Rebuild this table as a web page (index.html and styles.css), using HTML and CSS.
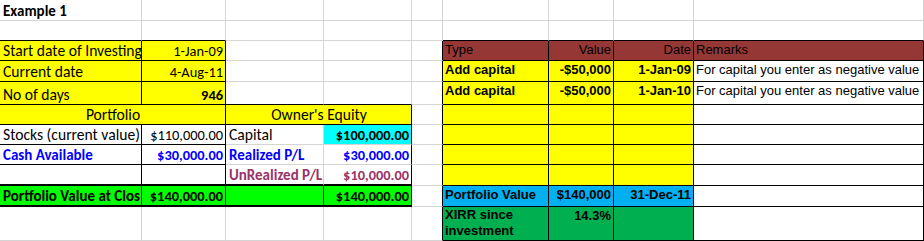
FILE: index.html
```html
<!DOCTYPE html>
<html>
<head>
<meta charset="utf-8">
<title>Example 1</title>
<link rel="stylesheet" href="styles.css">
</head>
<body>
<div class="sheet">
  <!-- row 1 -->
  <div class="c b">Example 1</div><div class="c"></div><div class="c"></div><div class="c"></div><div class="c"></div><div class="c"></div><div class="c"></div><div class="c"></div><div class="c"></div>
  <!-- row 2 -->
  <div class="c kb"></div><div class="c kb"></div><div class="c"></div><div class="c"></div><div class="c"></div><div class="c kb"></div><div class="c kb"></div><div class="c kb"></div><div class="c kb"></div>
  <!-- row 3 -->
  <div class="c k yel">Start date of Investing</div>
  <div class="c k yel r n">1-Jan-09</div>
  <div class="c"></div><div class="c"></div><div class="c kr"></div>
  <div class="c ar k brn">Type</div>
  <div class="c ar k brn r">Value</div>
  <div class="c ar k brn r">Date</div>
  <div class="c ar k brn">Remarks</div>
  <!-- row 4 -->
  <div class="c k yel">Current date</div>
  <div class="c k yel r n">4-Aug-11</div>
  <div class="c"></div><div class="c"></div><div class="c kr"></div>
  <div class="c ar k yel b">Add capital</div>
  <div class="c ar k yel b r">-$50,000</div>
  <div class="c ar k yel b r">1-Jan-09</div>
  <div class="c ar k">For capital you enter as negative value</div>
  <!-- row 5 -->
  <div class="c k yel">No of days</div>
  <div class="c k yel b r n">946</div>
  <div class="c kb"></div><div class="c kb"></div><div class="c kr"></div>
  <div class="c ar k yel b">Add capital</div>
  <div class="c ar k yel b r">-$50,000</div>
  <div class="c ar k yel b r">1-Jan-10</div>
  <div class="c ar k">For capital you enter as negative value</div>
  <!-- row 6 -->
  <div class="c k yel s2 ctr">Portfolio</div>
  <div class="c k yel s2 ctr">Owner's Equity</div>
  <div class="c kr"></div>
  <div class="c ar k yel"></div><div class="c ar k yel"></div><div class="c ar k yel"></div><div class="c ar k"></div>
  <!-- row 7 -->
  <div class="c k">Stocks (current value)</div>
  <div class="c k r n">$110,000.00</div>
  <div class="c">Capital</div>
  <div class="c kr cyn b r n">$100,000.00</div>
  <div class="c kr"></div>
  <div class="c ar k yel"></div><div class="c ar k yel"></div><div class="c ar k yel"></div><div class="c ar k"></div>
  <!-- row 8 -->
  <div class="c k b blue">Cash Available</div>
  <div class="c k b blue r n">$30,000.00</div>
  <div class="c b blue">Realized P/L</div>
  <div class="c kr b blue r n">$30,000.00</div>
  <div class="c kr"></div>
  <div class="c ar k yel"></div><div class="c ar k yel"></div><div class="c ar k yel"></div><div class="c ar k"></div>
  <!-- row 9 -->
  <div class="c kr kb2"></div>
  <div class="c kr kb2"></div>
  <div class="c kb2 b mauve">UnRealized P/L</div>
  <div class="c kr kb2 b mauve r n">$10,000.00</div>
  <div class="c kr"></div>
  <div class="c ar k yel"></div><div class="c ar k yel"></div><div class="c ar k yel"></div><div class="c ar k"></div>
  <!-- row 10 -->
  <div class="c kr kb2 grn b">Portfolio Value at Clos</div>
  <div class="c kr kb2 grn b r n">$140,000.00</div>
  <div class="c kr kb2 grn"></div>
  <div class="c kr kb2 grn b r n">$140,000.00</div>
  <div class="c kr"></div>
  <div class="c ar k blu b">Portfolio Value</div>
  <div class="c ar k blu b r">$140,000</div>
  <div class="c ar k blu b r">31-Dec-11</div>
  <div class="c ar k"></div>
  <!-- row 11 -->
  <div class="c"></div><div class="c"></div><div class="c"></div><div class="c"></div>
  <div class="c kr"></div>
  <div class="c ar k xgr b wrap">XIRR since investment</div>
  <div class="c ar k xgr b r">14.3%</div>
  <div class="c ar k xgr"></div>
  <div class="c ar k"></div>
</div>
</body>
</html>
```

FILE: styles.css
```css
* {
  box-sizing: border-box;
}

html,
body {
  margin: 0;
  padding: 0;
  background: #ffffff;
  overflow: hidden;
}

.sheet {
  display: grid;
  grid-template-columns: 142px 84px 98px 88px 31px 106px 65px 80px 230px;
  grid-template-rows: 21px 20px 20px 21px 23px 20px 20px 20px 21px 21px 34px;
  width: 924px;
}

.c {
  display: flex;
  align-items: flex-end;
  justify-content: flex-start;
  padding: 0 2px 0 3px;
  border-right: 1px solid #d4d4d4;
  border-bottom: 1px solid #d4d4d4;
  overflow: hidden;
  white-space: nowrap;
  font-family: Carlito, Lato, "Liberation Sans", sans-serif;
  font-size: 15.6px;
  line-height: 18px;
  color: #000000;
}

.b {
  font-weight: bold;
  font-size: 15px;
}

.n {
  font-size: 14.4px;
}

.ar {
  align-items: flex-start;
  padding: 1px 2px 0 2px;
  font-family: "Liberation Sans", Arial, sans-serif;
  font-size: 13px;
  line-height: 15px;
}

.wrap {
  white-space: normal;
  line-height: 16px;
  padding-top: 0;
}

.r {
  justify-content: flex-end;
}

.ctr {
  justify-content: center;
}

.s2 {
  grid-column: span 2;
}

.k {
  border-right-color: #000000;
  border-bottom-color: #000000;
}

.kr {
  border-right-color: #000000;
}

.kb {
  border-bottom-color: #000000;
}

.kb2 {
  border-bottom: 2px solid #000000;
}

.yel {
  background: #ffff00;
}

.brn {
  background: #953735;
}

.cyn {
  background: #00ffff;
}

.grn {
  background: #00ff00;
}

.blu {
  background: #00b0f0;
}

.xgr {
  background: #00b050;
}

.blue {
  color: #0000ff;
}

.mauve {
  color: #993366;
}
```
